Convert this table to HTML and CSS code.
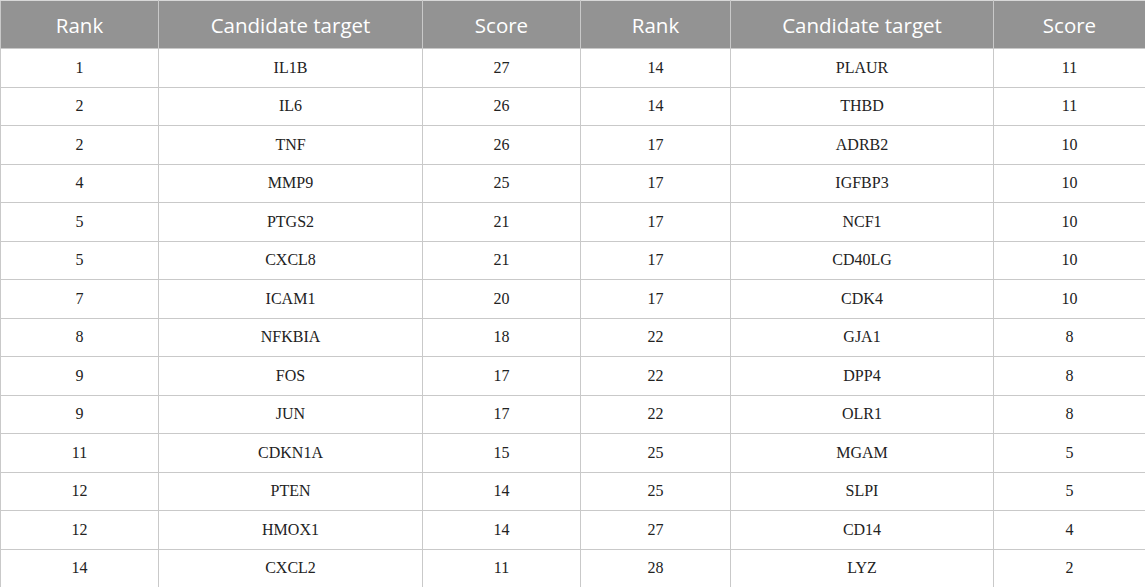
FILE: index.html
```html
<!DOCTYPE html>
<html>
<head>
<meta charset="utf-8">
<link rel="stylesheet" href="styles.css">
</head>
<body>
<table class="tbl">
<colgroup>
<col class="c1"><col class="c2"><col class="c3"><col class="c4"><col class="c5"><col class="c6">
</colgroup>
<thead>
<tr><th>Rank</th><th>Candidate target</th><th>Score</th><th>Rank</th><th>Candidate target</th><th>Score</th></tr>
</thead>
<tbody>
<tr><td>1</td><td>IL1B</td><td>27</td><td>14</td><td>PLAUR</td><td>11</td></tr>
<tr><td>2</td><td>IL6</td><td>26</td><td>14</td><td>THBD</td><td>11</td></tr>
<tr><td>2</td><td>TNF</td><td>26</td><td>17</td><td>ADRB2</td><td>10</td></tr>
<tr><td>4</td><td>MMP9</td><td>25</td><td>17</td><td>IGFBP3</td><td>10</td></tr>
<tr><td>5</td><td>PTGS2</td><td>21</td><td>17</td><td>NCF1</td><td>10</td></tr>
<tr><td>5</td><td>CXCL8</td><td>21</td><td>17</td><td>CD40LG</td><td>10</td></tr>
<tr><td>7</td><td>ICAM1</td><td>20</td><td>17</td><td>CDK4</td><td>10</td></tr>
<tr><td>8</td><td>NFKBIA</td><td>18</td><td>22</td><td>GJA1</td><td>8</td></tr>
<tr><td>9</td><td>FOS</td><td>17</td><td>22</td><td>DPP4</td><td>8</td></tr>
<tr><td>9</td><td>JUN</td><td>17</td><td>22</td><td>OLR1</td><td>8</td></tr>
<tr><td>11</td><td>CDKN1A</td><td>15</td><td>25</td><td>MGAM</td><td>5</td></tr>
<tr><td>12</td><td>PTEN</td><td>14</td><td>25</td><td>SLPI</td><td>5</td></tr>
<tr><td>12</td><td>HMOX1</td><td>14</td><td>27</td><td>CD14</td><td>4</td></tr>
<tr><td>14</td><td>CXCL2</td><td>11</td><td>28</td><td>LYZ</td><td>2</td></tr>
</tbody>
</table>
</body>
</html>
```
FILE: styles.css
```css
html, body {
  margin: 0;
  padding: 0;
  background: #ffffff;
}
.tbl {
  width: 1145px;
  border-collapse: collapse;
  table-layout: fixed;
}
.c1 { width: 158px; }
.c2 { width: 264px; }
.c3 { width: 158px; }
.c4 { width: 150px; }
.c5 { width: 263px; }
.c6 { width: 152px; }
.tbl th {
  height: 47px;
  padding: 0;
  background: #939393;
  color: #ffffff;
  font-family: "Open Sans", "Noto Sans", sans-serif;
  font-weight: 400;
  font-size: 20.5px;
  text-align: center;
  border: 1px solid #c9c9c9;
  border-top-color: #d8d8d8;
}
.tbl td {
  height: 37.5px;
  padding: 0;
  font-family: "Liberation Serif", "Times New Roman", serif;
  font-size: 16px;
  color: #222222;
  text-align: center;
  border: 1px solid #c9c9c9;
}
```
